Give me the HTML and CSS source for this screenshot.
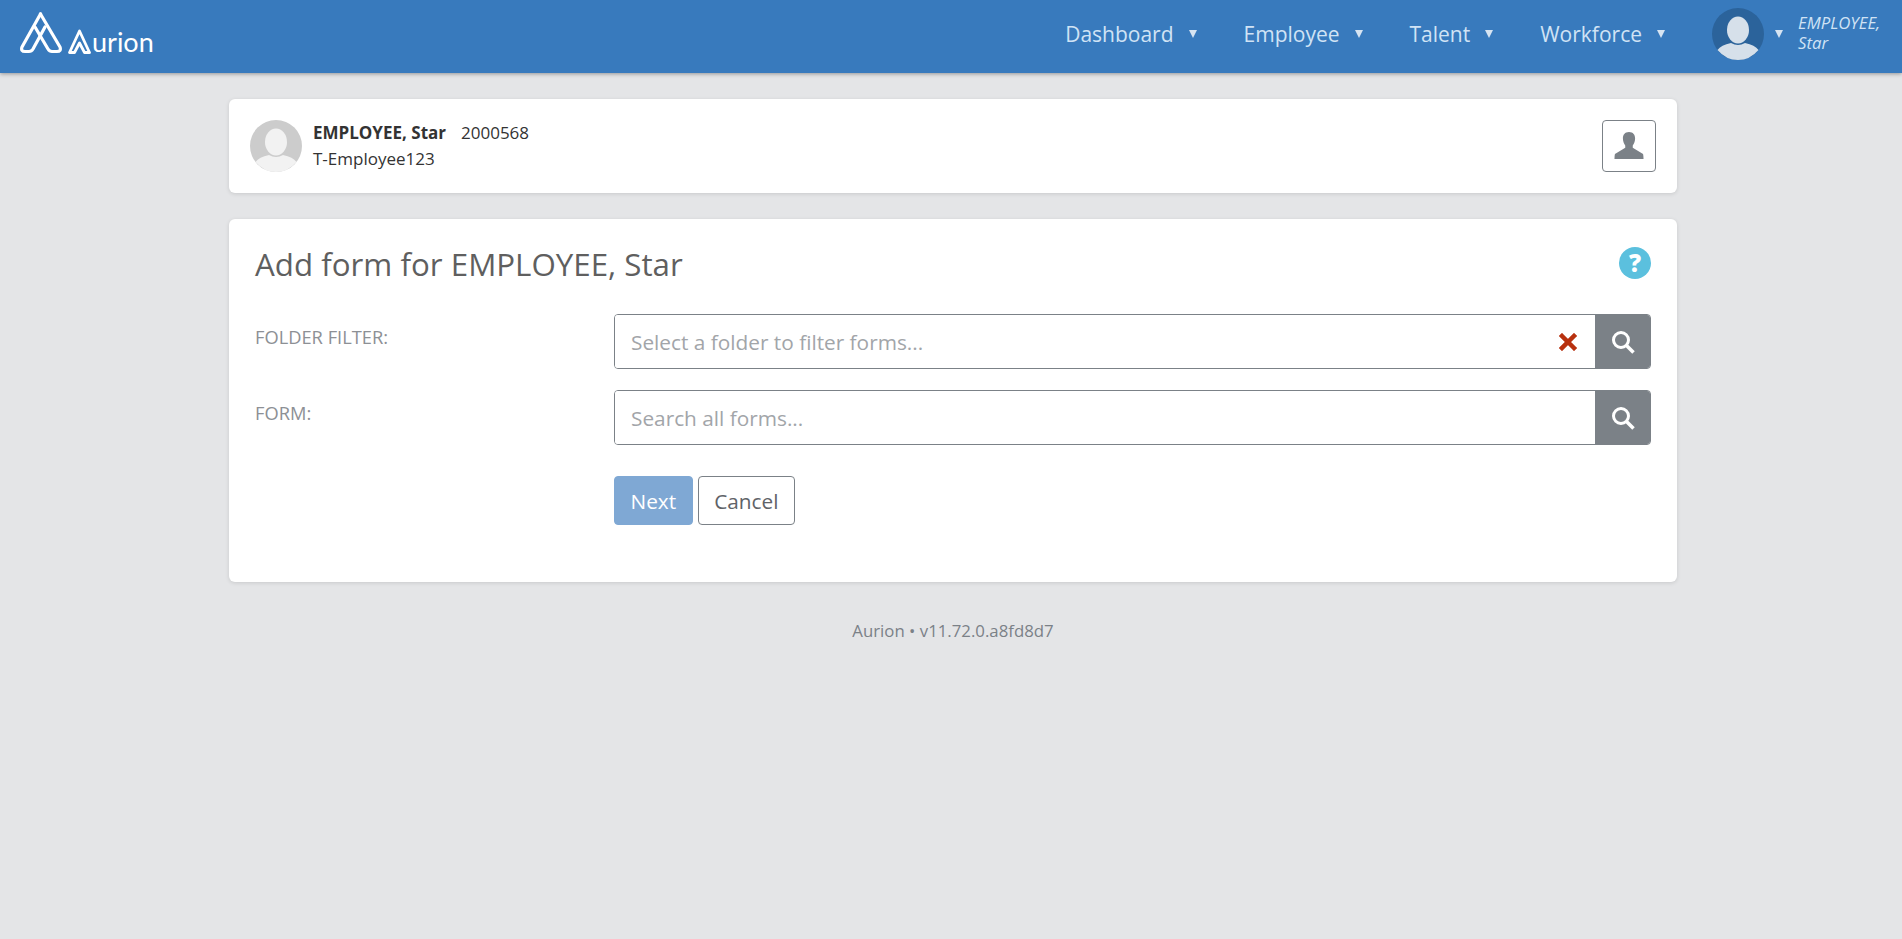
FILE: index.html
```html
<!DOCTYPE html>
<html lang="en">
<head>
    <meta charset="UTF-8">
    <meta name="viewport" content="width=device-width, initial-scale=1.0">
    <title>Add form</title>
    <link rel="stylesheet" href="styles.css">
</head>

<body>
    <!-- Top bar -->
    <header class="topbar">
        <a class="logo" href="#">
            <svg class="logo-mark" viewBox="0 0 44 42" width="44" height="42" fill="none" stroke="#fff" stroke-width="3.200" stroke-linejoin="round" stroke-linecap="round">
                <path d="M21.5 2 L3 35 Q1.500 39.500 6 39.500 L10 39.500 Q12.500 39.500 14 37 L26 15"/>
                <path d="M21.500 2 L41 35 Q42.500 39.500 38 39.500 L33 39.500 Q30.500 39.500 29 37 L16 15"/>
            </svg>
            <svg class="logo-a" viewBox="0 0 23 25" width="23" height="25" fill="none" stroke="#fff" stroke-width="2.800" stroke-linejoin="round">
                <path d="M1.500 23.500 L11.500 2 L21.500 23.500 L16.500 23.500 L11.500 14 L6.500 23.500 Z"/>
            </svg>
            <span class="logo-text">urion</span>
        </a>
        <nav class="nav">
            <a class="nav-item" href="#">Dashboard<span class="caret"></span></a>
            <a class="nav-item" href="#">Employee<span class="caret"></span></a>
            <a class="nav-item" href="#">Talent<span class="caret"></span></a>
            <a class="nav-item" href="#">Workforce<span class="caret"></span></a>
        </nav>
        <div class="user-menu">
            <svg class="avatar" viewBox="0 0 52 52" width="52" height="52">
                <circle cx="26" cy="26" r="26" fill="#2b639b"/>
                <ellipse cx="26" cy="22" rx="11" ry="13.500" fill="#d6e0ea"/>
                <path d="M5.500 42 Q9 37 19 35 Q26 39 33 35 Q43 37 46.500 42 Q38 52 26 52 Q14 52 5.500 42 Z" fill="#d6e0ea"/>
            </svg>
            <span class="caret"></span>
            <span class="user-name">EMPLOYEE, Star</span>
        </div>
    </header>

    <main class="page">
        <!-- Employee summary -->
        <section class="card summary">
            <svg class="avatar" viewBox="0 0 52 52" width="52" height="52">
                <circle cx="26" cy="26" r="26" fill="#cccccc"/>
                <ellipse cx="26" cy="22" rx="11" ry="13.500" fill="#f2f2f2"/>
                <path d="M5.500 42 Q9 37 19 35 Q26 39 33 35 Q43 37 46.500 42 Q38 52 26 52 Q14 52 5.500 42 Z" fill="#f2f2f2"/>
            </svg>
            <div class="summary-text">
                <div><strong>EMPLOYEE, Star</strong><span class="emp-no">2000568</span></div>
                <div>T-Employee123</div>
            </div>
            <button class="profile-btn" type="button">
                <svg viewBox="0 0 32 30" width="30" height="29" fill="#7b8187">
                    <path d="M16 0.500 C11.500 0.500 9.500 3.500 9.500 7.500 C9.500 11 11 13.500 12 15 L12 17.500 L1 24 Q0.500 26 0.500 29.500 L31.500 29.500 Q31.500 26 31 24 L20 17.500 L20 15 C21 13.500 22.500 11 22.500 7.500 C22.500 3.500 20.500 0.500 16 0.500 Z"/>
                </svg>
            </button>
        </section>

        <!-- Add form -->
        <section class="card form-card">
            <div class="form-head">
                <h2>Add form for EMPLOYEE, Star</h2>
                <span class="help">?</span>
            </div>

            <div class="form-row">
                <label for="folder">FOLDER FILTER:</label>
                <div class="input-group">
                    <input type="text" id="folder" placeholder="Select a folder to filter forms...">
                    <span class="clear">
                        <svg viewBox="0 0 18 18" width="18" height="18" stroke="#b8310f" stroke-width="4.500" stroke-linecap="square">
                            <path d="M3 3 L15 15 M15 3 L3 15"/>
                        </svg>
                    </span>
                    <button class="search-btn" type="button">
                        <svg viewBox="0 0 24 24" width="24" height="24" fill="none" stroke="#fff" stroke-width="3">
                            <circle cx="10" cy="10" r="7.500"/>
                            <path d="M15.500 15.500 L22.500 22.500" stroke-width="3.500"/>
                        </svg>
                    </button>
                </div>
            </div>

            <div class="form-row">
                <label for="form">FORM:</label>
                <div class="input-group">
                    <input type="text" id="form" placeholder="Search all forms...">
                    <button class="search-btn" type="button">
                        <svg viewBox="0 0 24 24" width="24" height="24" fill="none" stroke="#fff" stroke-width="3">
                            <circle cx="10" cy="10" r="7.500"/>
                            <path d="M15.500 15.500 L22.500 22.500" stroke-width="3.500"/>
                        </svg>
                    </button>
                </div>
            </div>

            <div class="actions">
                <button class="btn btn-next" type="button">Next</button>
                <button class="btn btn-cancel" type="button">Cancel</button>
            </div>
        </section>

        <p class="version">Aurion • v11.72.0.a8fd8d7</p>
    </main>
</body>

</html>
```

FILE: styles.css
```css
/* General Styles */
body {
    font-family: "Open Sans", Arial, sans-serif;
    margin: 0;
    padding: 0;
    background-color: #e4e5e7;
    color: #333;
    min-height: 100vh;
}

/* Top bar */
.topbar {
    display: flex;
    align-items: center;
    height: 73px;
    box-sizing: border-box;
    background-color: #387abd;
    box-shadow: 0 1px 4px rgba(0, 0, 0, 0.35);
    padding: 0 0 5px 19px;
}

.logo {
    display: flex;
    align-items: flex-end;
    color: white;
    text-decoration: none;
    height: 42px;
    margin-top: -2px;
}

.logo-a {
    margin-left: 5px;
}

.logo-text {
    font-family: Lato, sans-serif;
    font-size: 27px;
    line-height: 24px;
    margin-left: 1px;
}

.nav {
    display: flex;
    margin-left: auto;
}

.nav-item {
    display: flex;
    align-items: center;
    color: #d0e3f5;
    text-decoration: none;
    font-size: 21px;
    margin-right: 47px;
}

.caret {
    display: inline-block;
    width: 0;
    height: 0;
    border-left: 4.500px solid transparent;
    border-right: 4.500px solid transparent;
    border-top: 8px solid #d6e4f2;
    margin-left: 15px;
}

.user-menu {
    display: flex;
    align-items: center;
    width: 190px;
    flex-shrink: 0;
}

.user-menu .caret {
    margin-left: 11px;
}

.user-name {
    font-style: italic;
    font-size: 16.750px;
    line-height: 20px;
    color: #d0e3f5;
    width: 90px;
    margin: -3px 0 0 15px;
}

/* Cards */
.page {
    margin: 26px 225px 0 229px;
}

.card {
    background-color: white;
    border-radius: 6px;
    box-shadow: 0 1px 4px rgba(0, 0, 0, 0.12);
}

.summary {
    display: flex;
    align-items: center;
    height: 94px;
    padding: 0 21px;
    box-sizing: border-box;
}

.summary-text {
    margin-left: 11px;
    font-size: 17px;
    line-height: 26px;
    color: #333;
}

.emp-no {
    margin-left: 15px;
}

.profile-btn {
    display: flex;
    align-items: center;
    justify-content: center;
    margin-left: auto;
    width: 54px;
    height: 52px;
    padding: 0 0 1px;
    background-color: white;
    border: 1px solid #7b8187;
    border-radius: 4px;
}

.form-card {
    margin-top: 26px;
    height: 363px;
    padding: 0 26px;
    box-sizing: border-box;
}

.form-head {
    display: flex;
    justify-content: space-between;
    align-items: center;
    height: 90px;
    margin-bottom: 5px;
}

.form-head h2 {
    margin: 0;
    font-size: 31.300px;
    font-weight: 400;
    color: #5f5f5f;
}

.help {
    display: flex;
    align-items: center;
    justify-content: center;
    width: 32px;
    height: 32px;
    margin-top: -2px;
    border-radius: 50%;
    background-color: #5bc0de;
    color: white;
    font-size: 24px;
    font-weight: 800;
    line-height: 32px;
}

.form-row {
    display: flex;
    margin-bottom: 21px;
}

.form-row label {
    width: 359px;
    flex-shrink: 0;
    font-size: 18.300px;
    line-height: 46px;
    color: #8d9095;
}

.input-group {
    display: flex;
    flex: 1;
    height: 55px;
    box-sizing: border-box;
    border: 1px solid #7b8187;
    border-radius: 4px;
    background-color: white;
    overflow: hidden;
}

.input-group input {
    flex: 1;
    min-width: 0;
    border: none;
    outline: none;
    padding: 0 16px;
    font-family: inherit;
    font-size: 20.800px;
    color: #333;
}

.input-group input::placeholder {
    color: #a2a5a9;
}

.clear {
    display: flex;
    align-items: center;
    margin-right: 18px;
}

.search-btn {
    display: flex;
    align-items: center;
    justify-content: center;
    width: 55px;
    padding: 0;
    border: none;
    background-color: #7b8187;
}

.actions {
    display: flex;
    gap: 5px;
    margin-top: 31px;
    margin-left: 359px;
}

.btn {
    height: 49px;
    padding: 0 15.500px;
    border-radius: 4px;
    font-family: inherit;
    font-size: 20.800px;
    box-sizing: border-box;
}

.btn-next {
    background-color: #7fa8d4;
    border: 1px solid #7fa8d4;
    color: white;
}

.btn-cancel {
    background-color: white;
    border: 1px solid #7b8187;
    color: #5f6368;
}

.version {
    margin: 37px 0 0;
    text-align: center;
    font-size: 16.800px;
    color: #7b8187;
}
```
